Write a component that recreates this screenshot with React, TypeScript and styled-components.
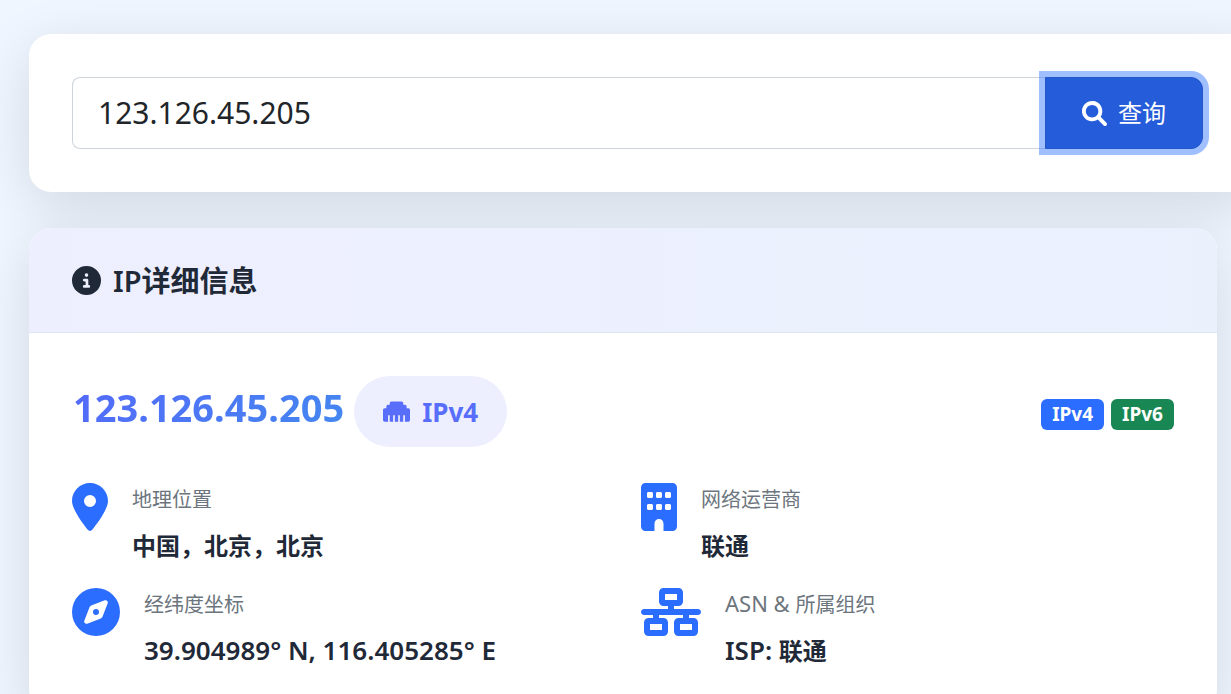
import React from "react";
import styled, { createGlobalStyle } from "styled-components";
import {
  FaBuilding,
  FaCircleInfo,
  FaCompass,
  FaEthernet,
  FaLocationDot,
  FaNetworkWired,
} from "react-icons/fa6";

const GlobalStyle = createGlobalStyle`
  *, *::before, *::after { box-sizing: border-box; }
  body {
    margin: 0;
    overflow: hidden;
    background: #eff6ff;
    color: #1f2937;
    font-family: "Noto Sans", "Noto Sans CJK SC", sans-serif;
  }
  h1, h2, dl, dd, dt { margin: 0; }
`;

const Page = styled.main`
  display: flex;
  flex-direction: column;
  gap: 36px;
  min-height: 100vh;
  padding: 34px 14px 36px 29px;
`;

const Card = styled.section`
  border-radius: 22px;
  background: #fff;
  box-shadow: 0 14px 56px rgba(0, 0, 0, 0.12);
`;

const SearchCard = styled(Card)`
  margin-right: -43px;
  padding: 43px 57px 43px 43px;
`;

const SearchForm = styled.form`
  display: flex;
  height: 72px;
`;

const SearchInput = styled.input`
  flex: 1;
  min-width: 0;
  padding: 0 25px 2px;
  border: 1px solid #ced4da;
  border-right: 0;
  border-radius: 8px 0 0 8px;
  outline: 0;
  background: #fff;
  color: #212529;
  font: 400 30px "Noto Sans", sans-serif;
`;

const SearchButton = styled.button`
  display: flex;
  align-items: center;
  justify-content: center;
  gap: 11px;
  width: 158px;
  border: 1px solid #2157cc;
  border-radius: 0 12px 12px 0;
  background: #255cd9;
  box-shadow: 0 0 0 6px rgba(64, 128, 255, 0.5);
  color: #fff;
  font: 400 24px/34px "Noto Sans", "Noto Sans CJK SC", sans-serif;
`;

const DetailCard = styled(Card)`
  overflow: hidden;
`;

const CardHeader = styled.header`
  display: flex;
  align-items: center;
  gap: 12px;
  height: 105px;
  padding: 0 43px;
  border-bottom: 1px solid #dee5f2;
  background: linear-gradient(90deg, #eeeffe, #eaf1fd);
`;

const CardTitle = styled.h2`
  padding-top: 2px;
  font-size: 29px;
  font-weight: 600;
  line-height: 36px;
`;

const CardBody = styled.div`
  padding: 43px;
`;

const Summary = styled.div`
  display: flex;
  align-items: center;
  height: 71px;
  margin-bottom: 36px;
`;

const Address = styled.h1`
  margin-right: 10px;
  padding: 0 0 9px 1px;
  background: linear-gradient(135deg, #5468fa, #4389ef);
  background-clip: text;
  -webkit-background-clip: text;
  color: transparent;
  font-size: 38px;
  font-weight: 700;
  line-height: 60px;
`;

const VersionPill = styled.span`
  display: flex;
  align-items: center;
  gap: 12px;
  height: 71px;
  padding: 0 29px;
  border-radius: 36px;
  background: #eeeffe;
  color: #586efb;
  font-size: 26px;
  font-weight: 700;
`;

const Badges = styled.div`
  display: flex;
  gap: 7px;
  margin-left: auto;
  padding-top: 6px;
`;

const Badge = styled.span<{ $color: string }>`
  padding: 0 11px;
  border-radius: 6px;
  background: ${(p) => p.$color};
  color: #fff;
  font-size: 19px;
  font-weight: 700;
  line-height: 31px;
`;

const Details = styled.dl`
  display: grid;
  grid-template-columns: 1fr 1fr;
  gap: 24px 36px;
`;

const Detail = styled.div<{ $iconWidth: number }>`
  display: flex;
  gap: 24px;

  > svg {
    flex: none;
    width: ${(p) => p.$iconWidth}px;
    height: 48px;
    color: #2b6eff;
  }
`;

const Label = styled.dt`
  margin-bottom: 13px;
  padding-top: 1px;
  color: #6c757d;
  font-size: 20px;
  font-weight: 400;
  line-height: 31px;
`;

const LabelLatin = styled.span`
  font-size: 22px;
  line-height: 22px;
`;

const Value = styled.dd`
  font-size: 24px;
  font-weight: 600;
  line-height: 36px;
`;

const ValueLatin = styled.span`
  font-size: 26px;
  line-height: 26px;
`;

function SearchIcon() {
  return (
    <svg width="25" height="25" viewBox="0 0 512 512" fill="currentColor" aria-hidden="true">
      <path d="M500.3 443.7l-119.7-119.7c27.22-40.41 40.65-90.9 33.46-144.7C401.8 87.79 326.8 13.32 235.2 1.723C99.01-15.51-15.51 99.01 1.724 235.2c11.6 91.64 86.08 166.7 177.6 178.9c53.8 7.189 104.3-6.236 144.7-33.46l119.7 119.7c15.62 15.62 40.95 15.62 56.57 0C515.9 484.7 515.9 459.3 500.3 443.7zM79.1 208c0-70.58 57.42-128 128-128s128 57.42 128 128c0 70.58-57.42 128-128 128S79.1 278.6 79.1 208z" />
    </svg>
  );
}

const details = [
  { icon: FaLocationDot, iconWidth: 36, label: "地理位置", value: "中国，北京，北京" },
  { icon: FaBuilding, iconWidth: 36, label: "网络运营商", value: "联通" },
  { icon: FaCompass, iconWidth: 48, label: "经纬度坐标", valueLatin: "39.904989° N, 116.405285° E" },
  { icon: FaNetworkWired, iconWidth: 60, labelLatin: "ASN & ", label: "所属组织", valueLatin: "ISP: ", value: "联通" },
];

export default function App() {
  return (
    <>
      <GlobalStyle />
      <Page lang="zh-CN">
        <SearchCard>
          <SearchForm onSubmit={(e: React.FormEvent) => e.preventDefault()}>
            <SearchInput aria-label="IP" defaultValue="123.126.45.205" />
            <SearchButton type="submit">
              <SearchIcon />
              <span>查询</span>
            </SearchButton>
          </SearchForm>
        </SearchCard>

        <DetailCard>
          <CardHeader>
            <FaCircleInfo size={29} />
            <CardTitle>IP详细信息</CardTitle>
          </CardHeader>
          <CardBody>
            <Summary>
              <Address>123.126.45.205</Address>
              <VersionPill>
                <FaEthernet size={27} />
                IPv4
              </VersionPill>
              <Badges>
                <Badge $color="#2b6eff">IPv4</Badge>
                <Badge $color="#198754">IPv6</Badge>
              </Badges>
            </Summary>
            <Details>
              {details.map(({ icon: Icon, iconWidth, labelLatin, label, valueLatin, value }) => (
                <Detail key={label} $iconWidth={iconWidth}>
                  <Icon />
                  <div>
                    <Label>
                      {labelLatin && <LabelLatin>{labelLatin}</LabelLatin>}
                      {label}
                    </Label>
                    <Value>
                      {valueLatin && <ValueLatin>{valueLatin}</ValueLatin>}
                      {value}
                    </Value>
                  </div>
                </Detail>
              ))}
            </Details>
          </CardBody>
        </DetailCard>
      </Page>
    </>
  );
}
